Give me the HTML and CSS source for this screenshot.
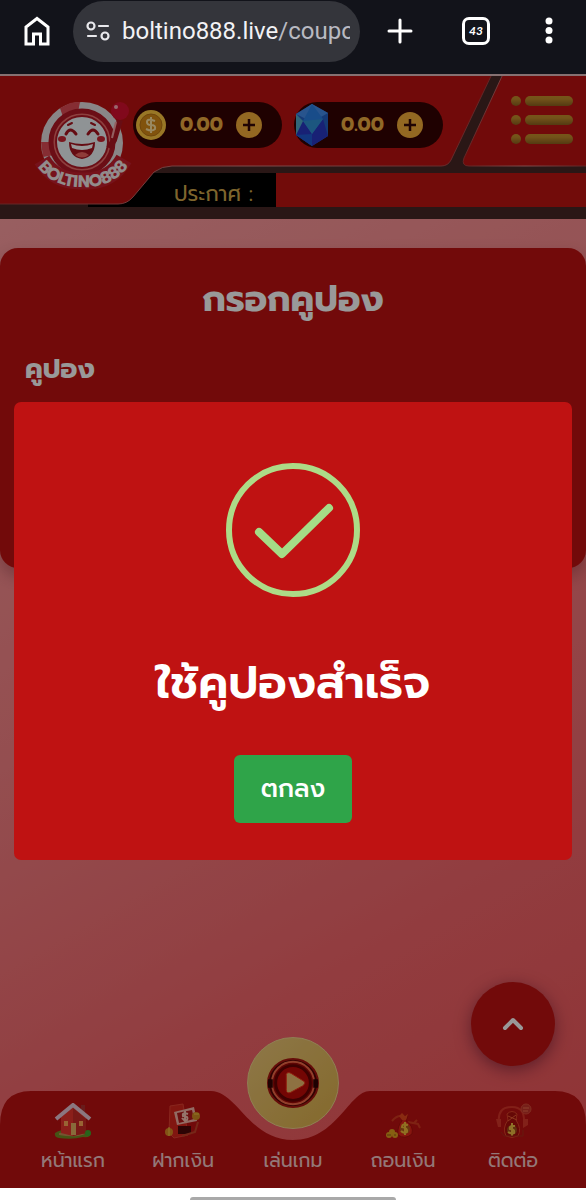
FILE: index.html
```html
<!DOCTYPE html>
<html lang="th">
<head>
<meta charset="utf-8">
<meta name="viewport" content="width=device-width, initial-scale=1">
<title>กรอกคูปอง</title>
<link rel="stylesheet" href="styles.css">
</head>
<body>
<div class="browser-bar">
  <button class="bar-button" aria-label="Home">
    <svg width="28" height="30" viewBox="0 0 28 30" fill="none" stroke="#fff" stroke-width="3"><path d="M3 28V11L14 2.500L25 11V28H17.500V18H10.500V28Z"/></svg>
  </button>
  <div class="address">
    <svg width="24" height="20" viewBox="0 0 24 20" fill="none" stroke="#e8e8ec" stroke-width="2.200" stroke-linecap="round"><circle cx="5" cy="5" r="3.500"/><path d="M13 5H22M2 15H10"/><circle cx="19" cy="15" r="3.500"/></svg>
    <div class="url">boltino888.live<span class="url-path">/coupo</span></div>
  </div>
  <div class="bar-actions">
    <button class="bar-button" aria-label="New tab">
      <svg width="26" height="26" viewBox="0 0 26 26" stroke="#fff" stroke-width="3" stroke-linecap="round"><path d="M13 2V24M2 13H24"/></svg>
    </button>
    <button class="tabs" aria-label="Tabs">43</button>
    <button class="bar-button" aria-label="More">
      <svg width="8" height="28" viewBox="0 0 8 28" fill="#fff"><circle cx="4" cy="4" r="3.500"/><circle cx="4" cy="13.500" r="3.500"/><circle cx="4" cy="23" r="3.500"/></svg>
    </button>
  </div>
</div>

<div class="page">
  <header class="header">
    <svg class="header-shape" viewBox="0 0 586 145" preserveAspectRatio="none" aria-hidden="true">
      <defs>
        <linearGradient id="edge" x1="0" x2="1"><stop offset="0" stop-color="#a63c3c"/><stop offset=".5" stop-color="#d88080"/><stop offset="1" stop-color="#a63c3c"/></linearGradient>
      </defs>
      <rect width="586" height="145" fill="#462726"/>
      <path d="M88 103H276V133H88Z" fill="#000"/>
      <path d="M150 99H276V133H150Z" fill="#000"/>
      <path d="M276 99H586V133H276Z" fill="#be1411"/>
      <path d="M0 0H492L451 86Q448 92 441 92H172Q162 92 154 98L133 123Q127 130 118 130H0Z" fill="#bd1211"/>
      <path d="M492 0L451 86Q448 92 441 92H172Q162 92 154 98L133 123Q127 130 118 130H0" fill="none" stroke="url(#edge)"/>
      <path d="M503 0H586V92H469Q461 92 464 84Z" fill="#bd1211"/>
      <path d="M503 0L464 84Q461 92 469 92H586" fill="none" stroke="url(#edge)"/>
      <path d="M0 1H586" stroke="#e0bcbe" stroke-width="2"/>
    </svg>

    <svg class="logo" viewBox="0 0 96 90" role="img" aria-label="BOLTINO888">
      <circle cx="48" cy="41" r="41" fill="#e5dfe1"/>
      <path d="M26 6L36 1Q42 0 46 0L44 10L29 15ZM7 40L17 40L20 53L9 55ZM78 60L86 64L77 76L68 69Z" fill="#df4b55"/>
      <circle cx="48" cy="40" r="31" fill="#ec6c6a" stroke="#b31825" stroke-width="5"/>
      <circle cx="48" cy="40" r="26" fill="#eef6f8" stroke="#b31825" stroke-width="2"/>
      <g fill="none" stroke="#a91420" stroke-width="3" stroke-linecap="round"><path d="M32 32Q36 24 42 32M54 32Q59 24 64 32"/><path d="M34 23L38 21M57 21L61 23" stroke-width="2"/></g>
      <ellipse cx="28" cy="37" rx="4" ry="3" fill="#cc2632"/><ellipse cx="67" cy="37" rx="4" ry="3" fill="#cc2632"/>
      <path d="M35 40Q48 44 61 40Q61 55 48 57Q35 55 35 40Z" fill="#a91420"/>
      <path d="M37 42Q48 46 59 42L58 46Q48 50 38 46Z" fill="#fff"/><path d="M41 53Q48 47 55 53Q48 58 41 53Z" fill="#ee6460"/>
      <path d="M86 18L80 38L75 46" fill="none" stroke="#ae1722" stroke-width="6"/><path d="M82 20L78 36" stroke="#f5a0a0" stroke-width="2"/>
      <circle cx="86" cy="9" r="9" fill="#d8102f"/><circle cx="82" cy="5" r="2" fill="#ffb0b6"/>
      <path d="M8 58Q21 80 49 79Q77 80 90 57" fill="none" stroke="#c51f2d" stroke-width="17"/>
      <path id="arc" d="M1 61Q17 86 49 85Q81 86 97 60" fill="none"/>
      <text class="logo-text" text-anchor="middle"><textPath href="#arc" startOffset="50%">BOLTINO888</textPath></text>
    </svg>

    <div class="toolbar">
      <div class="wallet">
        <svg width="32" height="32" viewBox="0 0 32 32" aria-hidden="true"><circle cx="16" cy="16" r="15" fill="#ffc640"/><circle cx="16" cy="16" r="11" fill="#d78b17" stroke="#bb7615"/><path d="M20 12Q12 9 12 13Q12 16 16 16Q21 16 20 20Q17 23 11 20M16 8V24" fill="none" stroke="#ffe4a2" stroke-width="2"/></svg>
        <span class="amount">0.00</span>
        <button class="add" aria-label="เติมเหรียญ"><svg width="14" height="14" viewBox="0 0 14 14"><path d="M7 1V13M1 7H13" stroke="#350707" stroke-width="2.500"/></svg></button>
      </div>
      <div class="wallet">
        <svg width="32" height="42" viewBox="0 0 32 42" aria-hidden="true"><path d="M16 0L32 9V32L16 42L0 31V10Z" fill="#2461c5"/><path d="M16 0L0 10L16 18L32 9Z" fill="#438ceb"/><path d="M16 0L7 17L16 30L27 15Z" fill="#287fe4"/><path d="M0 31L7 17L16 30L27 15L32 32L16 42Z" fill="#2938c4"/><path d="M7 17L27 15L16 30Z" fill="#2f90d4"/><path d="M0 10L7 17L0 31Z" fill="#53aaca"/><path d="M0 31L16 30L16 42Z" fill="#1f5bd4"/></svg>
        <span class="amount">0.00</span>
        <button class="add" aria-label="เติมเพชร"><svg width="14" height="14" viewBox="0 0 14 14"><path d="M7 1V13M1 7H13" stroke="#350707" stroke-width="2.500"/></svg></button>
      </div>
    </div>
    <button class="menu" aria-label="เมนู">
      <svg width="64" height="50" viewBox="0 0 64 50"><defs><linearGradient id="gold" x2="0" y2="1"><stop stop-color="#c48f2a"/><stop offset=".3" stop-color="#c08a2c"/><stop offset="1" stop-color="#8c611e"/></linearGradient></defs><g fill="url(#gold)"><circle cx="6" cy="6" r="5"/><rect x="15" y="1" width="48" height="10" rx="5"/><circle cx="6" cy="25" r="5"/><rect x="15" y="20" width="48" height="10" rx="5"/><circle cx="6" cy="44" r="5"/><rect x="15" y="39" width="48" height="10" rx="5"/></g></svg>
    </button>
    <div class="notice">ประกาศ :</div>
  </header>

  <main class="main">
    <form class="card">
      <h1 class="card-title">กรอกคูปอง</h1>
      <label class="card-label" for="coupon">คูปอง</label>
      <input class="card-input" id="coupon" type="text">
    </form>
  </main>

  <button class="to-top" aria-label="กลับด้านบน"><svg width="22" height="14" viewBox="0 0 22 14" fill="none" stroke="#fff" stroke-width="4" stroke-linecap="round" stroke-linejoin="round"><path d="M3 11L11 3L19 11"/></svg></button>

  <nav class="nav">
    <svg class="nav-shape" viewBox="0 0 586 97" preserveAspectRatio="none" aria-hidden="true"><path d="M0 97V34Q0 0 31 0H211C237 0 249 49 293 49C337 49 349 0 370 0H555Q586 0 586 34V97Z" fill="#bd1211"/></svg>
    <a class="nav-item" href="#home">
      <svg class="nav-icon" viewBox="0 0 38 36"><path d="M1 30Q8 25 19 27Q31 25 37 30Q37 35 29 34Q18 37 5 35Q0 34 1 30Z" fill="#738c24"/><path d="M5 30Q18 27 31 31Q22 35 5 32Z" fill="#c48d52"/><path d="M27 2H31V12H27Z" fill="#ad302d"/><path d="M7 14L19 4L32 15V30L19 33L7 30Z" fill="#e8352c"/><path d="M19 5L32 16V30L19 33Z" fill="#c92a25"/><path d="M2 16L19 2L36 16" fill="none" stroke="#e8c6d5" stroke-width="4"/><path d="M17 20H22V32H17Z" fill="#e3b363"/><path d="M10 18H14V23H10ZM25 18H29V23H25Z" fill="#ffa758"/><circle cx="34" cy="30" r="3" fill="#44a52d"/></svg>
      <span>หน้าแรก</span>
    </a>
    <a class="nav-item" href="#deposit">
      <svg class="nav-icon" viewBox="0 0 38 36"><path d="M6 3L19 1L24 32L10 35L5 30Z" fill="#d8261c" stroke="#e34032"/><path d="M14 23H27V31H14Z" fill="#4b0808"/><path d="M18 33L31 29L34 19" fill="none" stroke="#c54229" stroke-width="2"/><path d="M10 9L30 4L33 18L13 22Z" fill="#f3b2a6"/><path d="M13 10L28 7L30 16L15 20Z" fill="#b51b1c"/><path d="M24 11Q18 9 19 13Q25 13 23 17Q20 18 18 15M21 8V19" fill="none" stroke="#f9c3b2" stroke-width="2"/><circle cx="32" cy="13" r="4" fill="#d38c23"/><circle cx="5" cy="29" r="4" fill="#da8a25"/><path d="M5 24V33M30 11H35" stroke="#f1c745"/></svg>
      <span>ฝากเงิน</span>
    </a>
    <a class="nav-item" href="#play">
      <span class="play"><svg width="54" height="52" viewBox="0 0 56 54"><ellipse cx="28" cy="27" rx="26" ry="25" fill="#510504" stroke="#a91610" stroke-width="2"/><circle cx="28" cy="27" r="22" fill="#9d0907" stroke="#f26a48" stroke-width="2"/><circle cx="28" cy="27" r="18" fill="#c00a08" stroke="#680202" stroke-width="3"/><path d="M2 23H7V32H2ZM49 23H54V32H49Z" fill="#330303"/><path d="M21 18Q22 15 26 17L39 25Q42 27 38 30L25 37Q21 38 21 34Z" fill="#edbc6e" stroke="#f22e13" stroke-width="1"/></svg></span>
      <span>เล่นเกม</span>
    </a>
    <a class="nav-item" href="#withdraw">
      <svg class="nav-icon" viewBox="0 0 38 36"><path d="M8 18Q14 11 20 14M24 19L34 21L36 25M30 20L33 17" fill="none" stroke="#d33a20" stroke-width="2"/><path d="M17 12L24 13L22 18Q30 23 28 31Q21 37 14 32Q13 23 18 18Z" fill="#e0251a" stroke="#a80f0b"/><path d="M15 13L18 10L21 13L24 11L22 17H18Z" fill="#e5481d"/><circle cx="21" cy="26" r="5" fill="#b15b1c"/><path d="M24 22Q18 20 18 24Q24 25 23 29Q20 31 17 28M21 19V32" fill="none" stroke="#f1bb39" stroke-width="2"/><g fill="#dfa01f"><circle cx="5" cy="32" r="3"/><circle cx="11" cy="32" r="3"/><circle cx="8" cy="29" r="3"/></g><path d="M3 32H7M10 32H12" stroke="#965914"/></svg>
      <span>ถอนเงิน</span>
    </a>
    <a class="nav-item" href="#contact">
      <svg class="nav-icon" viewBox="0 0 38 36"><path d="M5 20Q3 4 18 4Q31 4 30 20" fill="none" stroke="#d93528" stroke-width="2"/><path d="M2 16H7V24H4ZM29 16H34V22L29 25Z" fill="#d9382b"/><circle cx="32" cy="6" r="5" fill="#c5352a" stroke="#d94936"/><path d="M29 5H35M29 8H34" stroke="#ed6c4c"/><path d="M13 11Q18 6 23 11L22 17Q28 26 24 33Q18 36 12 33Q8 25 14 17Z" fill="#a80e0b" stroke="#e04429"/><path d="M14 13L23 17M22 12L14 18" stroke="#eb5d34"/><circle cx="18" cy="27" r="5" fill="#a2501c"/><path d="M21 23Q15 22 16 26Q21 26 20 30Q17 31 14 29M18 20V33" fill="none" stroke="#efbd43" stroke-width="2"/><path d="M7 29L10 33H29V27" fill="none" stroke="#a92a1b"/></svg>
      <span>ติดต่อ</span>
    </a>
  </nav>

  <div class="overlay">
    <section class="modal" role="dialog" aria-modal="true" aria-labelledby="result">
      <svg class="success" viewBox="0 0 136 136" fill="none" stroke="#addb87" aria-hidden="true"><circle cx="68" cy="68" r="64" stroke-width="6"/><path d="M34 70L57 92L104 46" stroke="#a5dc86" stroke-width="8" stroke-linecap="round" stroke-linejoin="round"/></svg>
      <h2 class="modal-title" id="result">ใช้คูปองสำเร็จ</h2>
      <button class="confirm">ตกลง</button>
    </section>
  </div>
</div>
<div class="gesture"><div class="gesture-handle"></div></div>
</body>
</html>
```

FILE: styles.css
```css
* { box-sizing: border-box; }

body {
  margin: 0;
  min-height: 100vh;
  display: flex;
  flex-direction: column;
  background: #fff;
  font-family: Prompt, Kanit, "Noto Sans Thai", "Noto Sans", sans-serif;
}

button {
  border: 0;
  padding: 0;
  background: none;
  font-family: inherit;
}

svg { display: block; flex: none; }

.browser-bar {
  display: flex;
  align-items: center;
  height: 74px;
  padding: 0 33px 12px 23px;
  background: #12131a;
}

.address {
  flex: 1;
  min-width: 0;
  display: flex;
  align-items: center;
  gap: 12px;
  height: 61px;
  margin: 0 27px 0 22px;
  padding: 0 10px 0 13px;
  border-radius: 31px;
  background: #34353b;
}

.url {
  flex: 1;
  overflow: hidden;
  white-space: nowrap;
  color: #f2f2f5;
  font: 24px/32px Roboto, sans-serif;
}

.url-path { color: #b9bac2; }

.bar-actions {
  display: flex;
  align-items: center;
  justify-content: space-between;
  width: 166px;
}

.tabs {
  width: 28px;
  height: 28px;
  margin-right: 6px;
  border: 3px solid #fff;
  border-radius: 7px;
  color: #fff;
  font: italic 700 12px/20px Lato, sans-serif;
}

.page {
  flex: 1;
  position: relative;
  display: flex;
  flex-direction: column;
  background: linear-gradient(150deg, #ffa5a8 0%, #f78285 48%, #f3656a 75%, #f05558 100%);
}

.header {
  position: relative;
  display: grid;
  grid-template-columns: 96px 1fr 64px;
  grid-template-rows: 99px 34px;
  padding: 0 12px 12px 34px;
}

.header-shape, .nav-shape {
  position: absolute;
  inset: 0;
  width: 100%;
  height: 100%;
}

.logo {
  position: relative;
  grid-row: 1 / 3;
  width: 96px;
  height: 90px;
  margin-top: 28px;
  overflow: visible;
}

.logo-text {
  font: 700 17px Prompt, Lato, sans-serif;
  fill: #f3e9ea;
}

.toolbar {
  position: relative;
  display: flex;
  align-items: center;
  gap: 12px;
  padding: 2px 0 0 3px;
}

.wallet {
  display: flex;
  align-items: center;
  gap: 10px;
  width: 149px;
  height: 46px;
  padding: 0 20px 0 2px;
  border-radius: 23px;
  background: #350303;
}

.amount {
  flex: 1;
  color: #f1ad41;
  font-size: 19px;
  font-weight: 700;
  line-height: 24px;
  text-align: center;
}

.add {
  display: grid;
  place-items: center;
  width: 26px;
  height: 26px;
  border-radius: 50%;
  background: #f5ad3a;
}

.menu {
  position: relative;
  align-self: center;
  margin-bottom: 8px;
}

.notice {
  position: relative;
  grid-column: 2 / 4;
  padding: 5px 0 0 44px;
  color: #d2a94c;
  font-size: 21px;
  line-height: 32px;
}

.main {
  flex: 1;
  padding-top: 29px;
}

.card {
  display: flex;
  flex-direction: column;
  height: 320px;
  padding: 26px 25px;
  border-radius: 18px;
  background: #be1211;
  box-shadow: 0 8px 16px rgba(80, 20, 30, .3);
  color: #fff;
}

.card-title {
  margin: 0 0 20px;
  font-size: 36px;
  line-height: 50px;
  text-align: center;
}

.card-label {
  font-size: 27px;
  font-weight: 700;
  line-height: 50px;
}

.card-input {
  height: 48px;
  margin-top: 16px;
  border: 0;
  border-radius: 6px;
}

.to-top {
  position: absolute;
  right: 31px;
  bottom: 122px;
  display: grid;
  place-items: center;
  width: 84px;
  height: 84px;
  border-radius: 50%;
  background: #be1211;
  box-shadow: 0 4px 16px rgba(70, 10, 40, .5);
}

.nav {
  position: relative;
  display: grid;
  grid-template-columns: repeat(5, 1fr);
  grid-template-rows: minmax(0, 1fr);
  height: 97px;
  padding: 0 18px 11px;
}

.nav-item {
  position: relative;
  display: flex;
  flex-direction: column;
  align-items: center;
  justify-content: flex-end;
  gap: 6px;
  color: #f5c9c9;
  font-size: 19px;
  line-height: 32px;
  text-decoration: none;
  white-space: nowrap;
}

.nav-icon { width: 38px; height: 36px; }

.play {
  flex: none;
  display: grid;
  place-items: center;
  width: 92px;
  height: 92px;
  margin-bottom: 10px;
  border-radius: 50%;
  border: 1px solid #efd38b;
  background: linear-gradient(135deg, #ecc778, #ddb04a);
}

.overlay {
  position: absolute;
  inset: 0;
  display: flex;
  align-items: center;
  justify-content: center;
  padding: 0 14px;
  background: rgba(0, 0, 0, .4);
}

.modal {
  display: flex;
  flex-direction: column;
  align-items: center;
  width: 100%;
  padding: 60px 20px 37px;
  border-radius: 7px;
  background: #bf1212;
}

.success { width: 136px; height: 136px; }

.modal-title {
  margin: 48px 0 36px;
  color: #fff;
  font-size: 46px;
  font-weight: 600;
  line-height: 73px;
  text-align: center;
}

.confirm {
  min-width: 118px;
  height: 68px;
  padding: 0 24px;
  border-radius: 6px;
  background: #2fa449;
  color: #fff;
  font-size: 25px;
  font-weight: 500;
}

.gesture {
  display: flex;
  justify-content: center;
  align-items: flex-end;
  height: 12px;
  background: #fff;
}

.gesture-handle {
  width: 35%;
  height: 3px;
  border-radius: 3px 3px 0 0;
  background: #a9a9a9;
}
```
